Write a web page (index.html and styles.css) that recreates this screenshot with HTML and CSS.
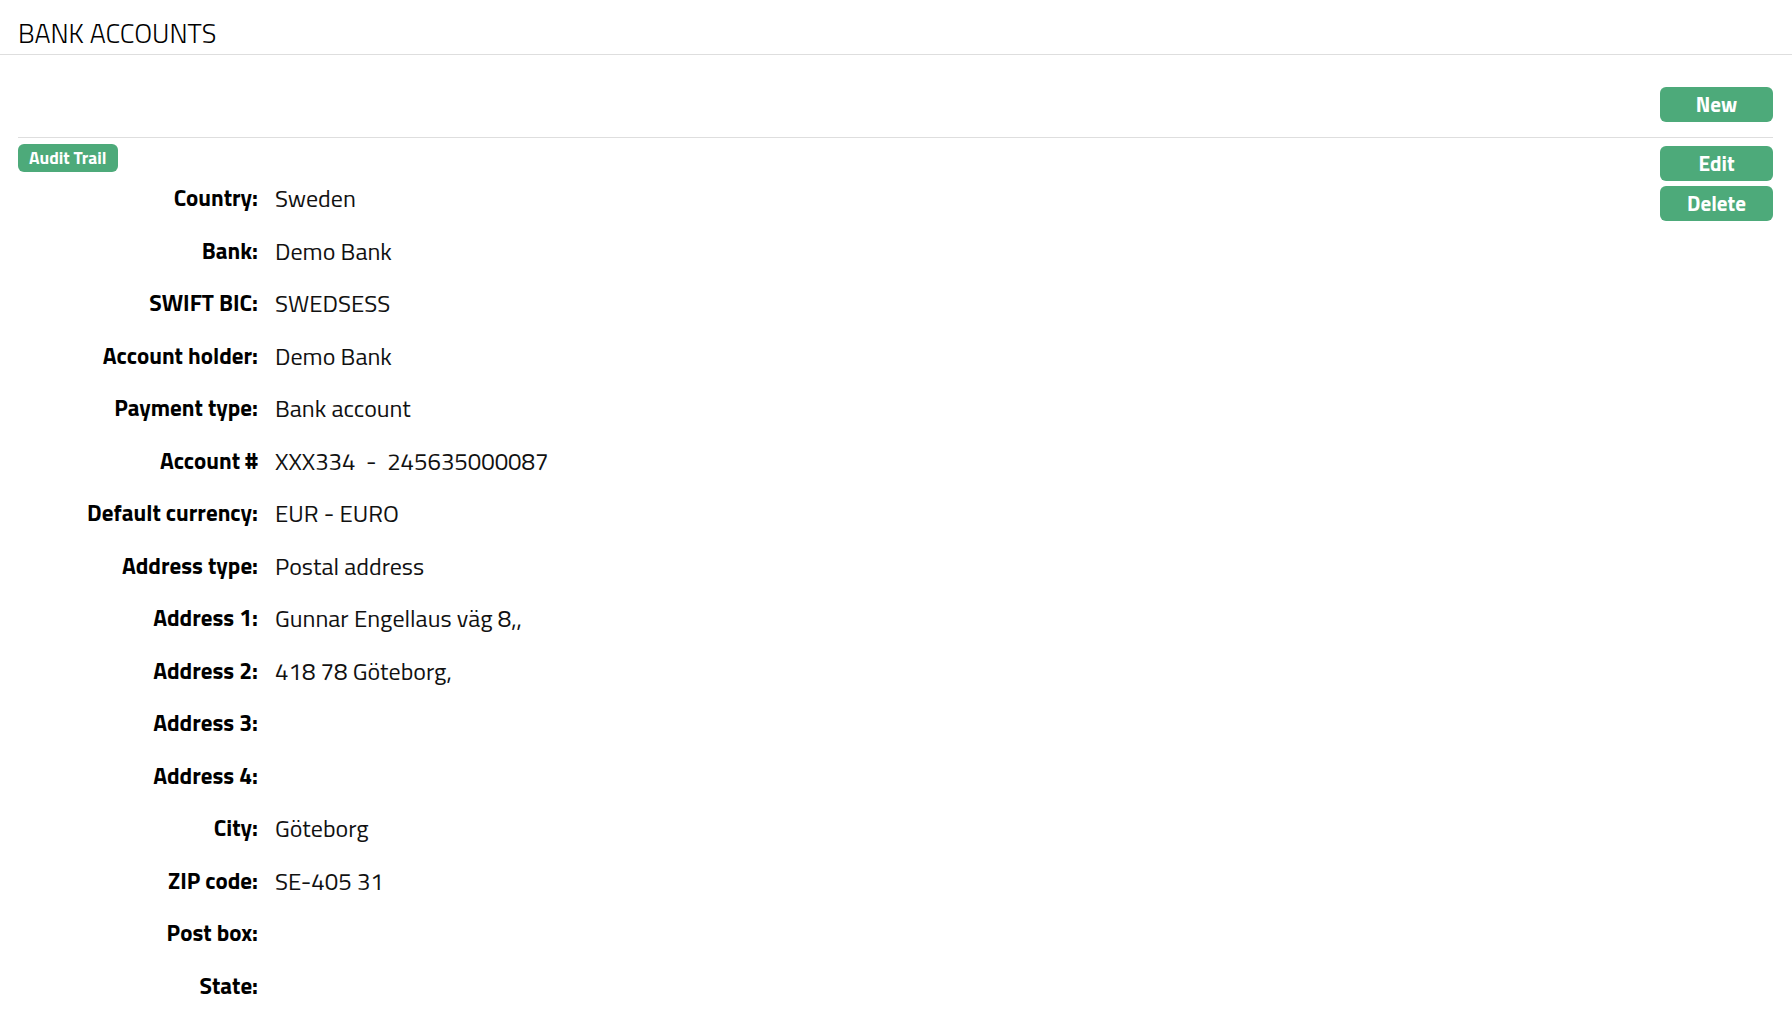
FILE: index.html
```html
<!DOCTYPE html>
<html lang="en">
<head>
<meta charset="utf-8">
<title>Bank accounts</title>
<link rel="stylesheet" href="styles.css">
</head>
<body>
<header class="page-header">
  <h1 class="page-title">BANK ACCOUNTS</h1>
</header>
<main class="content">
  <div class="toolbar">
    <button class="btn" type="button">New</button>
  </div>
  <section class="record">
    <div class="record-main">
      <span class="badge">Audit Trail</span>
      <dl class="details">
        <dt>Country:</dt><dd>Sweden</dd>
        <dt>Bank:</dt><dd>Demo Bank</dd>
        <dt>SWIFT BIC:</dt><dd>SWEDSESS</dd>
        <dt>Account holder:</dt><dd>Demo Bank</dd>
        <dt>Payment type:</dt><dd>Bank account</dd>
        <dt>Account #</dt><dd>XXX334 &nbsp;- &nbsp;245635000087</dd>
        <dt>Default currency:</dt><dd>EUR - EURO</dd>
        <dt>Address type:</dt><dd>Postal address</dd>
        <dt>Address 1:</dt><dd>Gunnar Engellaus väg 8,,</dd>
        <dt>Address 2:</dt><dd>418 78 Göteborg,</dd>
        <dt>Address 3:</dt><dd></dd>
        <dt>Address 4:</dt><dd></dd>
        <dt>City:</dt><dd>Göteborg</dd>
        <dt>ZIP code:</dt><dd>SE-405 31</dd>
        <dt>Post box:</dt><dd></dd>
        <dt>State:</dt><dd></dd>
      </dl>
    </div>
    <div class="record-actions">
      <button class="btn" type="button">Edit</button>
      <button class="btn" type="button">Delete</button>
    </div>
  </section>
</main>
</body>
</html>
```
FILE: styles.css
```css
* { box-sizing: border-box; }

html, body {
  margin: 0;
  padding: 0;
  background: #ffffff;
}

body {
  font-family: "Titillium Web", Roboto, "Liberation Sans", sans-serif;
  color: #111111;
  font-size: 24px;
}

.page-header {
  padding: 18px 18px 6px;
  border-bottom: 1px solid #dedede;
}

.page-title {
  margin: 0;
  font-size: 27px;
  line-height: 30px;
  font-weight: 300;
  color: #000000;
}

.content {
  padding: 0 19px 0 18px;
}

.toolbar {
  display: flex;
  justify-content: flex-end;
  padding: 32px 0 15px;
  border-bottom: 1px solid #dedede;
}

.btn {
  width: 113px;
  height: 35px;
  padding: 0;
  border: none;
  border-radius: 6px;
  background: #4daa7a;
  color: #ffffff;
  font-family: inherit;
  font-size: 21px;
  font-weight: 700;
  line-height: 35px;
  cursor: pointer;
}

.record {
  display: flex;
  align-items: flex-start;
  padding-top: 6px;
}

.record-main {
  flex: 1;
}

.record-actions {
  display: flex;
  flex-direction: column;
  gap: 5px;
  margin-top: 2px;
}

.badge {
  display: flex;
  align-items: center;
  width: max-content;
  height: 28px;
  padding: 0 11px;
  border-radius: 6px;
  background: #4daa7a;
  color: #ffffff;
  font-size: 17.5px;
  font-weight: 700;
  line-height: 28px;
}

.details {
  display: grid;
  grid-template-columns: 240px 1fr;
  column-gap: 17px;
  margin: 0;
}

.details dt,
.details dd {
  margin: 0;
  padding: 10px 0;
  line-height: 32.5px;
  min-height: 52.5px;
}

.details dt {
  text-align: right;
  font-size: 23px;
  font-weight: 700;
  color: #000000;
}

.details dd {
  font-weight: 400;
  color: #111111;
}
```
